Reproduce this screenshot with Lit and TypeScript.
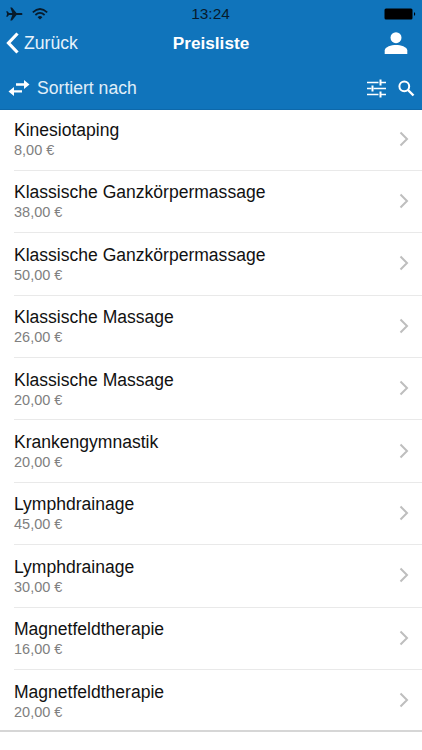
import { LitElement, html, css } from "lit";
import { customElement, property } from "lit/decorators.js";

interface PriceItem {
  name: string;
  price: string;
}

const items: PriceItem[] = [
  { name: "Kinesiotaping", price: "8,00 €" },
  { name: "Klassische Ganzkörpermassage", price: "38,00 €" },
  { name: "Klassische Ganzkörpermassage", price: "50,00 €" },
  { name: "Klassische Massage", price: "26,00 €" },
  { name: "Klassische Massage", price: "20,00 €" },
  { name: "Krankengymnastik", price: "20,00 €" },
  { name: "Lymphdrainage", price: "45,00 €" },
  { name: "Lymphdrainage", price: "30,00 €" },
  { name: "Magnetfeldtherapie", price: "16,00 €" },
  { name: "Magnetfeldtherapie", price: "20,00 €" },
];

@customElement("price-row")
export class PriceRow extends LitElement {
  @property() name = "";
  @property() price = "";

  static styles = css`
    :host {
      display: flex;
      box-sizing: border-box;
      height: 62.4px;
      margin-left: 14px;
      padding-right: 13px;
      align-items: flex-start;
      justify-content: space-between;
      border-bottom: 1px solid #e9e9e9;
    }
    :host(:last-of-type) {
      height: 60.4px;
      border-bottom: none;
    }
    .text {
      padding-top: 10.6px;
    }
    .name {
      font-size: 17.55px;
      line-height: 22px;
      color: #111;
    }
    .price {
      font-size: 14.5px;
      line-height: 19px;
      color: #808080;
    }
    .chevron {
      display: block;
      width: 11px;
      height: 16px;
      margin-top: 22.2px;
    }
  `;

  render() {
    return html`
      <div class="text">
        <div class="name">${this.name}</div>
        <div class="price">${this.price}</div>
      </div>
      <svg class="chevron" viewBox="0 0 11 16">
        <path d="M2.500 1.500L9 8L2.500 14.500" fill="none" stroke="#bebebe" stroke-width="2" />
      </svg>
    `;
  }
}

@customElement("app-root")
export class AppRoot extends LitElement {
  static styles = css`
    :host {
      display: block;
      height: 750px;
      overflow: hidden;
      background: #fff;
      font-family: "Liberation Sans", Arial, sans-serif;
    }
    svg {
      display: block;
    }
    .top {
      height: 110px;
      box-sizing: border-box;
      background: #1074bb;
      border-bottom: 1px solid #0d68aa;
      color: #fff;
    }
    .status,
    .nav {
      display: grid;
      grid-template-columns: 1fr auto 1fr;
      align-items: center;
    }
    .status {
      height: 27px;
      padding: 0 5px 0 6px;
      color: #071b2c;
    }
    .signals {
      display: flex;
      align-items: center;
      gap: 9px;
    }
    .time {
      font-size: 15.4px;
      line-height: 27px;
      padding-right: 2px;
    }
    .end {
      justify-self: end;
    }
    .nav {
      height: 32px;
      padding: 0 14px 0 6px;
    }
    .back {
      display: flex;
      align-items: center;
      gap: 5px;
      font-size: 17.6px;
      color: #e6f2fb;
    }
    .title {
      font-size: 17.2px;
      font-weight: bold;
      padding-left: 8px;
    }
    .tools {
      display: flex;
      align-items: center;
      height: 50px;
      padding: 8px 7px 0 8px;
      box-sizing: border-box;
    }
    .sort {
      font-size: 17.6px;
      margin-left: 7px;
      flex: 1;
      color: #e0eff9;
    }
    .search {
      margin-left: 12px;
    }
    .list {
      margin-top: -1.6px;
      border-bottom: 2px solid #d6d6d6;
    }
  `;

  render() {
    return html`
      <header class="top">
        <div class="status">
          <div class="signals">
            <svg width="17" height="14" viewBox="0 0 17 14">
              <path fill="#071b2c" d="M16.5 7C16.5 6.3 15.8 5.900 15 5.900H10.5L6 .5H4.300L6.300 5.900H3L1.5 4.200H.2L1.100 7L.2 9.800H1.5L3 8.100H6.300L4.300 13.500H6L10.500 8.100H15C15.800 8.100 16.500 7.700 16.500 7Z" />
            </svg>
            <svg width="16" height="12" viewBox="0 0 16 12">
              <g fill="none" stroke="#071b2c" stroke-width="1.7">
                <path d="M.8 4.300Q8-2.300 15.200 4.300" />
                <path d="M3.400 7Q8 2.800 12.600 7" />
              </g>
              <path fill="#071b2c" d="M5.600 9.200Q8 7 10.400 9.200L8 11.600Z" />
            </svg>
          </div>
          <div class="time">13:24</div>
          <svg class="end" width="33" height="12" viewBox="0 0 33 12">
            <rect x="0.500" y="0.500" width="28" height="11" rx="1.500" fill="#000" />
            <path d="M30 4Q32.500 6 30 8Z" fill="#000" />
          </svg>
        </div>
        <div class="nav">
          <div class="back">
            <svg width="13" height="22" viewBox="0 0 13 22">
              <path d="M11.500 1.500L2.500 11L11.500 20.500" fill="none" stroke="#fff" stroke-width="3.200" />
            </svg>
            <span>Zurück</span>
          </div>
          <div class="title">Preisliste</div>
          <svg class="end" width="24" height="22" viewBox="0 0 24 22">
            <circle cx="12" cy="5.700" r="5.500" fill="#fff" />
            <path d="M.7 22V18.500C.7 14.800 7.500 13 12 13S23.300 14.800 23.300 18.500V22Z" fill="#fff" />
          </svg>
        </div>
        <div class="tools">
          <svg width="22" height="18" viewBox="0 0 22 18">
            <path fill="#fff" d="M8 4.300H16V1L21.500 5.500L16 10V6.700H8ZM14 11.200H6V7.900L.5 12.400L6 16.900V13.600H14Z" />
          </svg>
          <span class="sort">Sortiert nach</span>
          <svg width="19" height="19" viewBox="0 0 19 19">
            <path fill="none" stroke="#fff" stroke-width="1.700" d="M0 3.500H11.500M13.500 3.500H19M0 9.500H4.500M6.500 9.500H19M0 15.500H11.500M13.500 15.500H19" />
            <path fill="none" stroke="#fff" stroke-width="2" d="M13.500 .5V6.500M5.500 6.500V12.500M13.500 12.500V18.500" />
          </svg>
          <svg class="search" width="17" height="17" viewBox="0 0 17 17">
            <circle cx="6.300" cy="6.300" r="4.900" fill="none" stroke="#fff" stroke-width="2" />
            <path d="M10 10L15.500 15.500" stroke="#fff" stroke-width="2.400" />
          </svg>
        </div>
      </header>
      <main class="list">
        ${items.map((i) => html`<price-row .name=${i.name} .price=${i.price}></price-row>`)}
      </main>
    `;
  }
}
